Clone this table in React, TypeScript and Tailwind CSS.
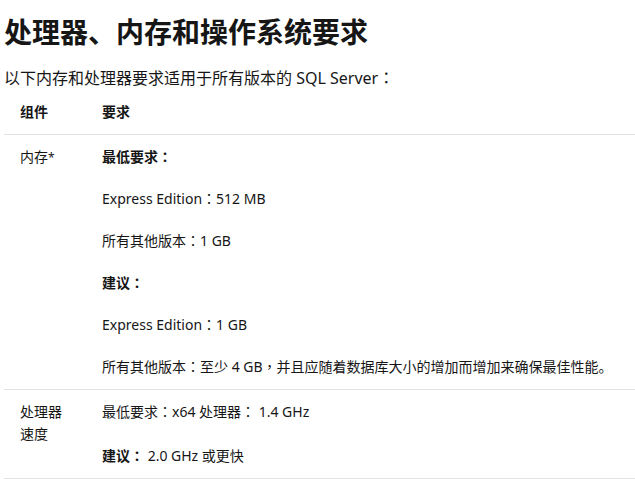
import React from "react";

function C() {
  return <span className="font-['Noto_Sans_CJK_TC',sans-serif] leading-[0]">：</span>;
}

export default function App() {
  return (
    <div className="min-h-screen bg-white pl-[4px] pt-[14px] text-[#161616] font-['Noto_Sans','Noto_Sans_CJK_SC',sans-serif]">
      <h1 className="text-[28px] font-bold leading-[36px]">处理器、内存和操作系统要求</h1>
      <p className="mt-[16px] text-[16px] leading-[24px]">
        以下内存和处理器要求适用于所有版本的 SQL Server<C />
      </p>
      <div className="text-[14px] leading-[22px]">
        <div className="grid grid-cols-[82px_1fr] border-b border-[#e3e3e3] py-[11px] font-bold">
          <div className="px-[16px]">组件</div>
          <div className="px-[16px]">要求</div>
        </div>
        <div className="grid grid-cols-[82px_1fr] border-b border-[#e3e3e3] py-[11px]">
          <div className="px-[16px]">
            内存<span className="text-[12px] leading-[0]">*</span>
          </div>
          <div className="flex flex-col gap-[20px] pl-[16px] pr-0">
            <p className="font-bold">最低要求<C /></p>
            <p>Express Edition<C />512 MB</p>
            <p>所有其他版本<C />1 GB</p>
            <p className="font-bold">建议<C /></p>
            <p>Express Edition<C />1 GB</p>
            <p className="whitespace-nowrap">
              所有其他版本<C />至少 4 GB<span className="font-['Noto_Sans_CJK_TC',sans-serif] leading-[0]">，</span>并且应随着数据库大小的增加而增加来确保最佳性能。
            </p>
          </div>
        </div>
        <div className="grid grid-cols-[82px_1fr] border-b border-[#e3e3e3] py-[11px]">
          <div className="px-[16px]">处理器速度</div>
          <div className="flex flex-col gap-[22px] pl-[16px]">
            <p>最低要求<C />x64 处理器<C /> 1.4 GHz</p>
            <p>
              <span className="font-bold">建议<C /></span> 2.0 GHz 或更快
            </p>
          </div>
        </div>
      </div>
    </div>
  );
}
